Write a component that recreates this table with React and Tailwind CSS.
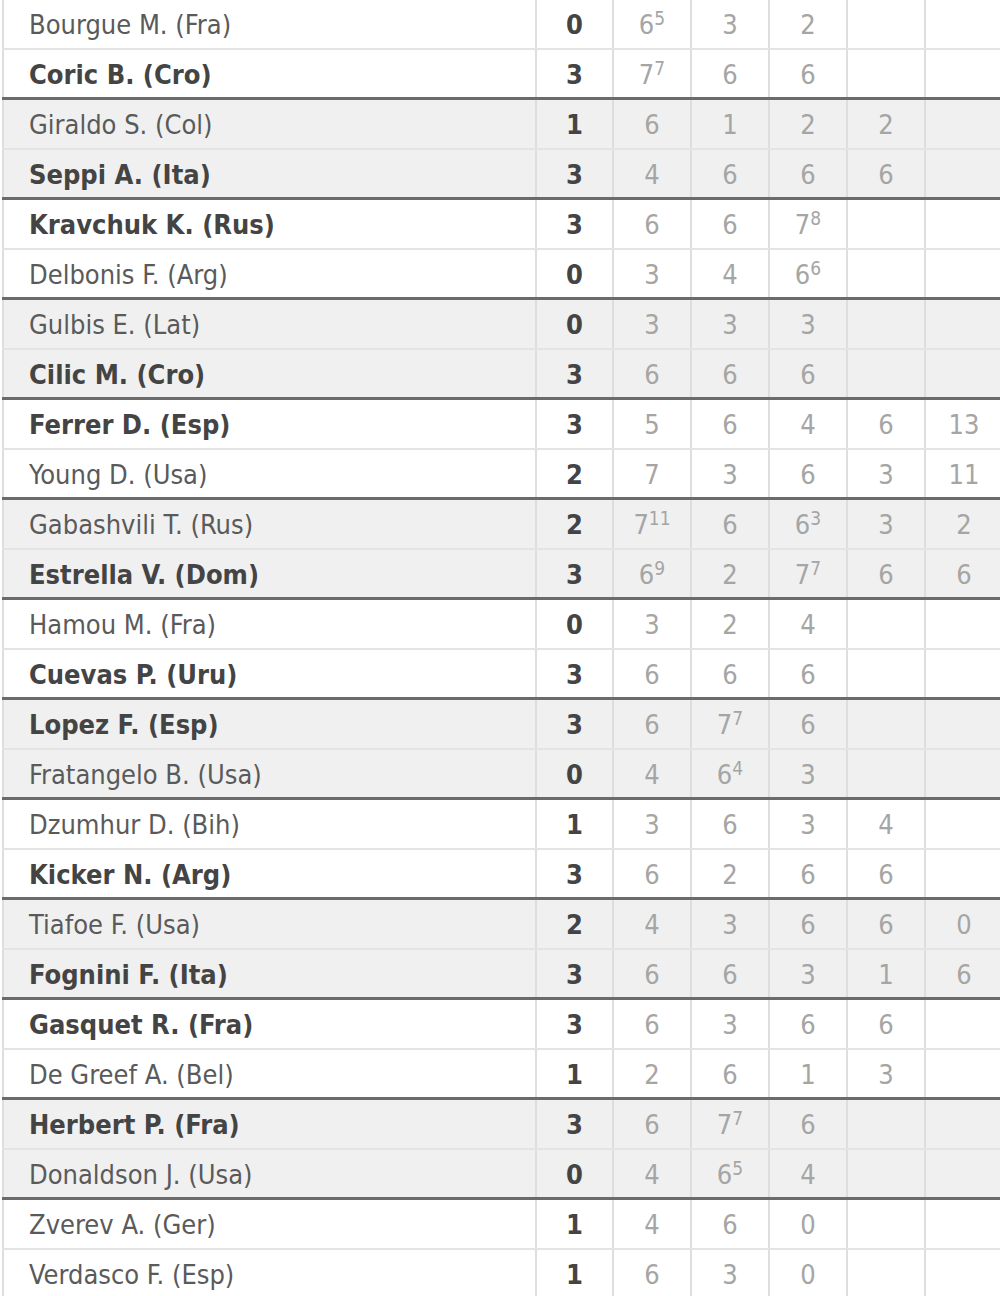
import React from 'react';

const matches = [
  [
    { name: 'Bourgue M. (Fra)', sets: 0, games: [[6, 5], 3, 2] },
    { name: 'Coric B. (Cro)', sets: 3, games: [[7, 7], 6, 6], win: true },
  ],
  [
    { name: 'Giraldo S. (Col)', sets: 1, games: [6, 1, 2, 2] },
    { name: 'Seppi A. (Ita)', sets: 3, games: [4, 6, 6, 6], win: true },
  ],
  [
    { name: 'Kravchuk K. (Rus)', sets: 3, games: [6, 6, [7, 8]], win: true },
    { name: 'Delbonis F. (Arg)', sets: 0, games: [3, 4, [6, 6]] },
  ],
  [
    { name: 'Gulbis E. (Lat)', sets: 0, games: [3, 3, 3] },
    { name: 'Cilic M. (Cro)', sets: 3, games: [6, 6, 6], win: true },
  ],
  [
    { name: 'Ferrer D. (Esp)', sets: 3, games: [5, 6, 4, 6, 13], win: true },
    { name: 'Young D. (Usa)', sets: 2, games: [7, 3, 6, 3, 11] },
  ],
  [
    { name: 'Gabashvili T. (Rus)', sets: 2, games: [[7, 11], 6, [6, 3], 3, 2] },
    { name: 'Estrella V. (Dom)', sets: 3, games: [[6, 9], 2, [7, 7], 6, 6], win: true },
  ],
  [
    { name: 'Hamou M. (Fra)', sets: 0, games: [3, 2, 4] },
    { name: 'Cuevas P. (Uru)', sets: 3, games: [6, 6, 6], win: true },
  ],
  [
    { name: 'Lopez F. (Esp)', sets: 3, games: [6, [7, 7], 6], win: true },
    { name: 'Fratangelo B. (Usa)', sets: 0, games: [4, [6, 4], 3] },
  ],
  [
    { name: 'Dzumhur D. (Bih)', sets: 1, games: [3, 6, 3, 4] },
    { name: 'Kicker N. (Arg)', sets: 3, games: [6, 2, 6, 6], win: true },
  ],
  [
    { name: 'Tiafoe F. (Usa)', sets: 2, games: [4, 3, 6, 6, 0] },
    { name: 'Fognini F. (Ita)', sets: 3, games: [6, 6, 3, 1, 6], win: true },
  ],
  [
    { name: 'Gasquet R. (Fra)', sets: 3, games: [6, 3, 6, 6], win: true },
    { name: 'De Greef A. (Bel)', sets: 1, games: [2, 6, 1, 3] },
  ],
  [
    { name: 'Herbert P. (Fra)', sets: 3, games: [6, [7, 7], 6], win: true },
    { name: 'Donaldson J. (Usa)', sets: 0, games: [4, [6, 5], 4] },
  ],
  [
    { name: 'Zverev A. (Ger)', sets: 1, games: [4, 6, 0] },
    { name: 'Verdasco F. (Esp)', sets: 1, games: [6, 3, 0] },
  ],
];

const SetCell = ({ value }) => (
  <div className="border-l-2 border-[#dedede] flex items-center justify-center pt-[3px] text-[#a5a5a5]">
    {Array.isArray(value) ? (
      <span>
        {value[0]}
        <sup className="text-[19px] -top-[9px]">{value[1]}</sup>
      </span>
    ) : (
      value
    )}
  </div>
);

const PlayerRow = ({ player, last }) => {
  const cells = [0, 1, 2, 3, 4].map((i) => player.games[i] ?? '');
  return (
    <div
      className={`grid grid-cols-[533px_77px_78px_78px_78px_78px_78px] h-[50px] ${
        last ? 'border-b-[3px] border-[#6b6b6b]' : 'border-b-2 border-[#e4e4e4]'
      }`}
    >
      <div
        className={`border-l-2 border-[#dedede] pl-[25px] pt-[3px] flex items-center ${
          player.win ? 'font-bold text-[#444]' : 'text-[#5a5a5a]'
        }`}
      >
        {player.name}
      </div>
      <div className="border-l-2 border-[#dedede] pt-[3px] flex items-center justify-center font-bold text-[#444]">
        {player.sets}
      </div>
      {cells.map((v, i) => (
        <SetCell key={i} value={v} />
      ))}
    </div>
  );
};

export default function App() {
  return (
    <div
      className="w-[1000px] h-[1296px] overflow-hidden bg-white text-[27px] pl-[2px]"
      style={{ fontFamily: '"DejaVu Sans Condensed", "DejaVu Sans", sans-serif' }}
    >
      {matches.map((pair, i) => (
        <div key={i} className={i % 2 === 1 ? 'bg-[#f0f0f0]' : 'bg-white'}>
          <PlayerRow player={pair[0]} />
          <PlayerRow player={pair[1]} last />
        </div>
      ))}
    </div>
  );
}
